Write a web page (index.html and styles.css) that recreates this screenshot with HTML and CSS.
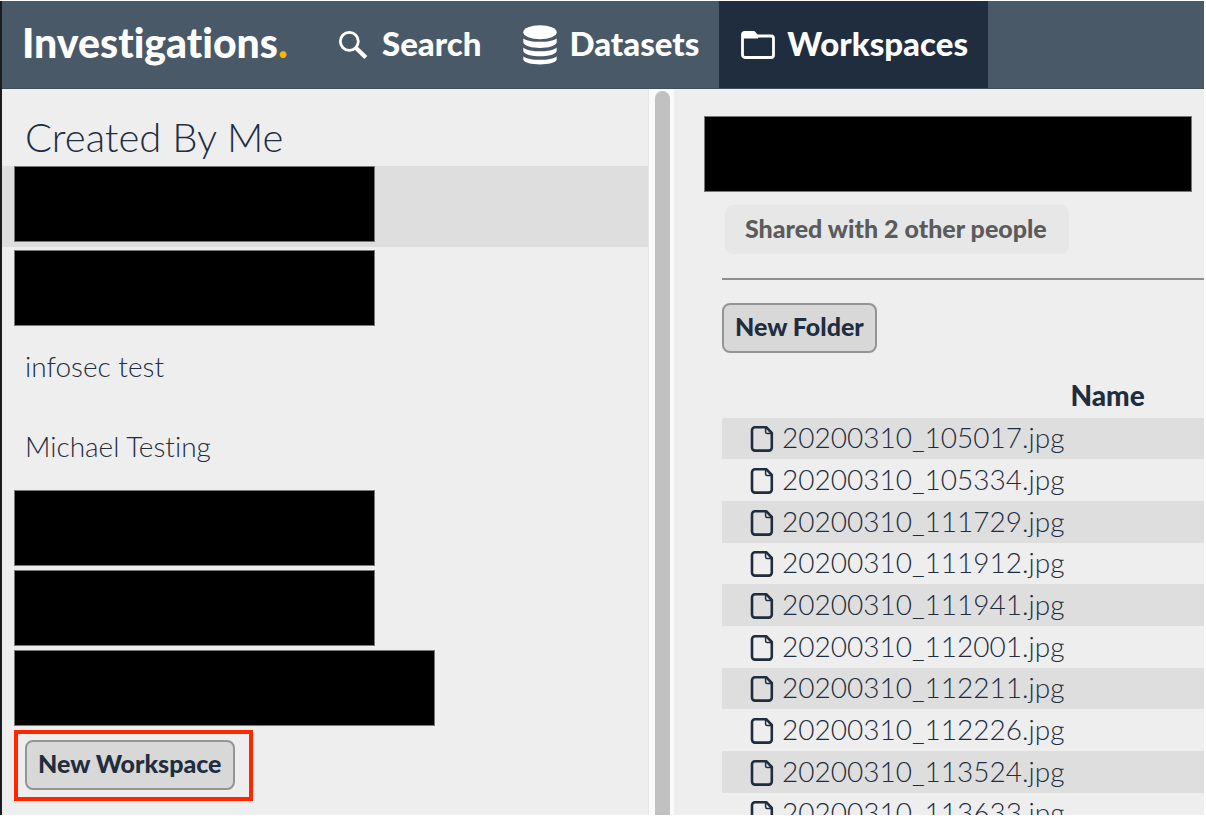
FILE: index.html
```html
<!DOCTYPE html>
<html lang="en">
<head>
<meta charset="utf-8">
<title>Investigations – Workspaces</title>
<link rel="stylesheet" href="styles.css">
</head>
<body>
<svg class="sprite" aria-hidden="true">
  <symbol id="file" viewBox="0 0 24 28">
    <path d="M5 2.2H16.2L21.8 8V22.6a3 3 0 0 1-3 3H5a3 3 0 0 1-3-3V5.2a3 3 0 0 1 3-3Z" fill="none" stroke="currentColor" stroke-width="2.6" stroke-linejoin="round"/>
    <path d="M15.6 3V7a1.6 1.6 0 0 0 1.6 1.6H21.4" fill="none" stroke="currentColor" stroke-width="1.5"/>
  </symbol>
</svg>
<div class="app">
  <header class="topbar">
    <a class="logo" href="#">Investigations<span class="logo-dot">.</span></a>
    <nav class="nav">
      <a class="tab" href="#">
        <svg class="icon-search" viewBox="0 0 30 30"><circle cx="11.3" cy="11.3" r="9" fill="none" stroke="currentColor" stroke-width="2.8"/><path d="M17.8 17.8L27.8 27.6" stroke="currentColor" stroke-width="4.2"/></svg>
        <span class="tab-label">Search</span>
      </a>
      <a class="tab tab-datasets" href="#">
        <svg class="icon-data" viewBox="0 0 34 40" fill="currentColor"><ellipse cx="17" cy="7.2" rx="16.7" ry="7"/><path d="M.3 13.4C6 18 28 18 33.7 13.4V17.5C32 24.7 2 24.7.3 17.5Z"/><path d="M.3 22.4C6 27.6 28 27.6 33.7 22.4V26C32 33 2 33 .3 26Z"/><path d="M.3 31.4C6 36 28 36 33.7 31.4V34.5C32 41 2 41 .3 34.5Z"/></svg>
        <span class="tab-label">Datasets</span>
      </a>
      <a class="tab tab-active" href="#" aria-current="page">
        <svg class="icon-folder" viewBox="0 0 34 28"><path d="M3.5 1.5H12.8L16 5H30A2.5 2.5 0 0 1 32.5 7.5V24A2.5 2.5 0 0 1 30 26.500H4A2.5 2.5 0 0 1 1.5 24V3.5A2 2 0 0 1 3.5 1.5Z" fill="none" stroke="currentColor" stroke-width="2.8"/><path d="M1.5 1.5H13L17 5V7.5H1.5Z" fill="currentColor"/></svg>
        <span class="tab-label">Workspaces</span>
      </a>
    </nav>
  </header>
  <div class="body">
    <aside class="sidebar">
      <h2 class="heading">Created By Me</h2>
      <ul class="list">
        <li class="item item-selected"><span class="redacted"></span></li>
        <li class="item"><span class="redacted"></span></li>
        <li class="item item-text"><a href="#">infosec test</a></li>
        <li class="item item-text"><a href="#">Michael Testing</a></li>
        <li class="item"><span class="redacted"></span></li>
        <li class="item"><span class="redacted"></span></li>
        <li class="item"><span class="redacted redacted-wide"></span></li>
      </ul>
      <div class="highlight"><button class="btn" type="button">New Workspace</button></div>
    </aside>
    <div class="track"><div class="thumb"></div></div>
    <main class="main">
      <div class="redacted redacted-title"></div>
      <div class="content">
        <div class="shared">Shared with 2 other people</div>
        <hr class="rule">
        <button class="btn" type="button">New Folder</button>
        <table class="files">
          <thead><tr><th>Name</th></tr></thead>
          <tbody>
            <tr><td><svg class="icon-file"><use href="#file"/></svg>20200310_105017.jpg</td></tr>
            <tr><td><svg class="icon-file"><use href="#file"/></svg>20200310_105334.jpg</td></tr>
            <tr><td><svg class="icon-file"><use href="#file"/></svg>20200310_111729.jpg</td></tr>
            <tr><td><svg class="icon-file"><use href="#file"/></svg>20200310_111912.jpg</td></tr>
            <tr><td><svg class="icon-file"><use href="#file"/></svg>20200310_111941.jpg</td></tr>
            <tr><td><svg class="icon-file"><use href="#file"/></svg>20200310_112001.jpg</td></tr>
            <tr><td><svg class="icon-file"><use href="#file"/></svg>20200310_112211.jpg</td></tr>
            <tr><td><svg class="icon-file"><use href="#file"/></svg>20200310_112226.jpg</td></tr>
            <tr><td><svg class="icon-file"><use href="#file"/></svg>20200310_113524.jpg</td></tr>
            <tr><td><svg class="icon-file"><use href="#file"/></svg>20200310_113633.jpg</td></tr>
          </tbody>
        </table>
      </div>
    </main>
  </div>
</div>
</body>
</html>
```
FILE: styles.css
```css
* { box-sizing: border-box; }
body {
  margin: 0;
  height: 100vh;
  padding: 1px 2px 3px 0;
  background: #fff;
  color: #1f2d3f;
  font-family: Lato, "Open Sans", sans-serif;
  font-size: 28px;
  font-weight: 300;
  font-variant-ligatures: none;
  overflow: hidden;
}
a { color: inherit; text-decoration: none; }
.sprite { display: none; }
.app {
  display: flex;
  flex-direction: column;
  height: 100%;
  border-left: 2px solid #1b1c1f;
  background: #eee;
  overflow: hidden;
}
.topbar {
  display: flex;
  flex: none;
  height: 88px;
  background: #4a5968;
  border-bottom: 1px solid #3b4e62;
  color: #fff;
  font-weight: 900;
}
.logo {
  padding-left: 20px;
  width: 314px;
  font-size: 41px;
  line-height: 84px;
}
.logo-dot { color: #fdb400; }
.nav { display: flex; font-size: 33px; }
.tab {
  display: flex;
  align-items: center;
  gap: 14px;
  padding: 0 20px 0 22px;
}
.tab-label { padding-bottom: 3px; }
.tab-datasets { gap: 12px; }
.tab-active { gap: 12px; background: #202d3e; }
.icon-search { width: 30px; height: 30px; }
.icon-data { width: 34px; height: 40px; }
.icon-folder { width: 34px; height: 28px; }
.body { display: flex; flex: 1; min-height: 0; overflow: hidden; }
.sidebar { flex: 646 1 0; min-width: 0; padding-top: 22px; }
.heading {
  margin: 0;
  padding: 0 0 2px 23px;
  font-size: 40px;
  font-weight: 300;
  line-height: 53px;
}
.list { margin: 0; padding: 0; list-style: none; }
.item { height: 80px; padding: 3px 0 0 12px; }
.item-selected { height: 81px; padding-top: 0; background: #dedede; }
.item-text { padding: 0 0 0 23px; line-height: 78px; }
.redacted {
  display: block;
  width: 361px;
  height: 76px;
  background: #000;
  border: 1px solid #777;
}
.redacted-wide { width: 421px; }
.redacted-title { width: auto; margin: 0 12px 0 30px; }
.highlight {
  width: fit-content;
  margin: 3px 0 0 12px;
  padding: 6px 14px 7px 7px;
  border: 4px solid #ff2600;
}
.btn {
  display: block;
  height: 50px;
  padding: 0 11px 4px;
  border: 2px solid #949494;
  border-radius: 8px;
  background: #d8d8d8;
  color: inherit;
  font: 900 25px Lato, "Open Sans", sans-serif;
}
.track {
  flex: none;
  width: 26px;
  padding: 2px 4px 0 6px;
  background: #fafafa;
  border-left: 1px solid #e6e6e6;
}
.thumb { height: calc(100% + 20px); border-radius: 8px; background: #c1c1c1; }
.main { flex: 530 1 0; min-width: 0; padding-top: 27px; overflow: hidden; }
.content { padding: 13px 0 0 48px; }
.shared {
  width: fit-content;
  margin-left: 3px;
  padding: 0 22px 2px 20px;
  border-radius: 8px;
  background: #e7e7e7;
  color: #5b5b5b;
  font-size: 25px;
  font-weight: 900;
  line-height: 47px;
}
.rule { margin: 24px 0 23px; border: 0; border-top: 2px solid #8e8e8e; }
.files { width: 160%; margin-top: 22px; border-collapse: collapse; }
.files th { height: 43px; padding: 0 0 2px; font-size: 28px; font-weight: 900; line-height: 39px; }
.files td { height: 42px; padding: 0 0 3px 28px; line-height: 38px; }
.files tr:nth-child(3n+1) td { height: 41px; }
.files tbody tr:nth-child(odd) { background: #dedede; }
.icon-file { width: 24px; height: 28px; margin-right: 8px; vertical-align: -5px; }
```
